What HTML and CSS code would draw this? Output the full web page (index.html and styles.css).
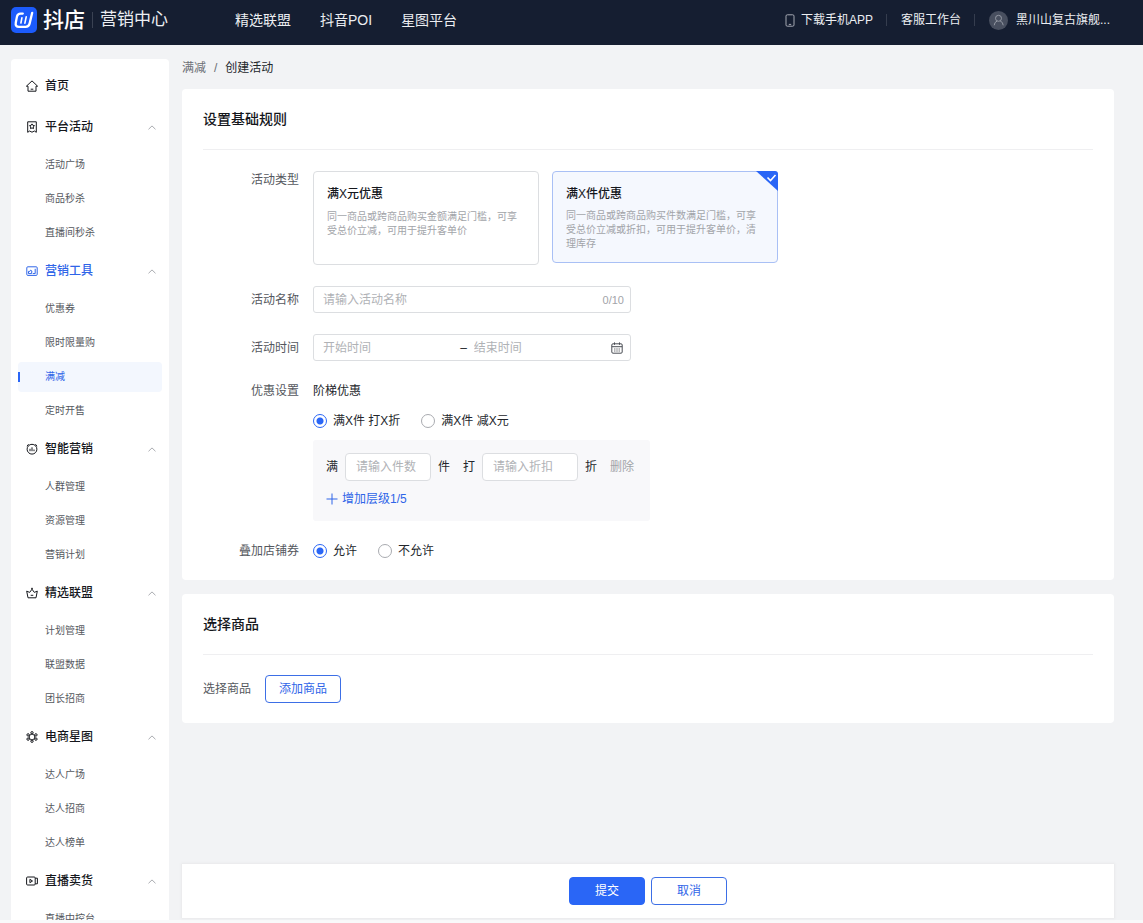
FILE: index.html
```html
<!DOCTYPE html>
<html lang="zh-CN">
<head>
<meta charset="utf-8">
<meta name="viewport" content="width=device-width, initial-scale=1">
<title>创建活动 - 营销中心</title>
<link rel="stylesheet" href="styles.css">
</head>
<body>
<svg class="sprite" aria-hidden="true">
  <symbol id="chevron" viewBox="0 0 8 5"><path d="M.5 4.300 4 .9l3.500 3.400"/></symbol>
</svg>

<header class="topbar">
  <a class="brand" href="#">
    <svg class="brand-mark" viewBox="0 0 26 26" aria-hidden="true">
      <rect width="26" height="26" rx="5" fill="#1c5bfb"/>
      <g fill="none" stroke="#fff" stroke-linecap="round" stroke-linejoin="round">
        <path stroke-width="2.300" d="M11.800 6.600H9.600Q6.700 6.600 6 9.400L4.800 15.500Q4 19.800 8 19.800h6.600q3.200 0 4-3.200L21.200 5.800"/>
        <path stroke-width="1.600" d="m10.900 10.800-1 5.200M15.200 9.800l-1.300 6.400"/>
      </g>
    </svg>
    <span class="brand-name">抖店</span>
    <span class="brand-sub">营销中心</span>
  </a>
  <nav class="topnav">
    <a href="#">精选联盟</a>
    <a href="#">抖音POI</a>
    <a href="#">星图平台</a>
  </nav>
  <div class="account">
    <a class="account-link" href="#">
      <svg class="phone" viewBox="0 0 10 13" aria-hidden="true"><rect x="1" y=".8" width="8" height="11.400" rx="1.300"/><path d="M3.800 10.400h2.400"/></svg>
      下载手机APP
    </a>
    <a class="account-link" href="#">客服工作台</a>
    <a class="account-link" href="#">
      <svg class="avatar" viewBox="0 0 19 19" aria-hidden="true"><circle cx="9.500" cy="9.500" r="9.500" fill="#484f5f"/><g fill="none" stroke="#9499a4"><circle cx="9.500" cy="7.300" r="3"/><path d="M5.200 14.300q.2-3.300 3-4.300m6 4.300q-.2-3.300-3-4.300"/></g></svg>
      黑川山复古旗舰...
    </a>
  </div>
</header>

<div class="layout">
  <nav class="sidebar" aria-label="主菜单">
    <a class="menu-head menu-home" href="#">
      <svg class="icon" viewBox="0 0 12 12" aria-hidden="true"><path d="M.4 6.200 6 .9l5.600 5.300H10v5H2v-5zM4.700 9.200h2.600"/></svg>
      首页
    </a>

    <button class="menu-head" type="button" aria-expanded="true">
      <svg class="icon" viewBox="0 0 12 12" aria-hidden="true"><path d="M1.700.8h8.600v10.500L8.400 10 6 11.200 3.600 10l-1.900 1.300zM6 2.900l.8 1.400 1.700.3-1.200 1.300.2 1.700L6 6.900l-1.500.7.2-1.700-1.200-1.300 1.700-.3z"/></svg>
      平台活动<svg class="chevron" aria-hidden="true"><use href="#chevron"/></svg>
    </button>
    <ul class="menu-list">
      <li><a href="#">活动广场</a></li>
      <li><a href="#">商品秒杀</a></li>
      <li><a href="#">直播间秒杀</a></li>
    </ul>

    <button class="menu-head is-current" type="button" aria-expanded="true">
      <svg class="icon" viewBox="0 0 12 12" aria-hidden="true"><rect x=".8" y="1.800" width="10.400" height="8.600" rx="1"/><path d="M2.500 8.600V6.400h1.300l.8-1.200 1.300.8-.4 2.600zM6.700 8.600h2.500V3.800"/></svg>
      营销工具<svg class="chevron" aria-hidden="true"><use href="#chevron"/></svg>
    </button>
    <ul class="menu-list">
      <li><a href="#">优惠券</a></li>
      <li><a href="#">限时限量购</a></li>
      <li><a class="is-active" href="#" aria-current="page">满减</a></li>
      <li><a href="#">定时开售</a></li>
    </ul>

    <button class="menu-head" type="button" aria-expanded="true">
      <svg class="icon" viewBox="0 0 12 12" aria-hidden="true"><circle cx="6" cy="6.200" r="4.900"/><path d="M1 3.200 2.600 1.200M11 3.200 9.400 1.200M4 5.800v2.400M6 4.300v3.900M8 6.500v1.700"/></svg>
      智能营销<svg class="chevron" aria-hidden="true"><use href="#chevron"/></svg>
    </button>
    <ul class="menu-list">
      <li><a href="#">人群管理</a></li>
      <li><a href="#">资源管理</a></li>
      <li><a href="#">营销计划</a></li>
    </ul>

    <button class="menu-head" type="button" aria-expanded="true">
      <svg class="icon" viewBox="0 0 12 12" aria-hidden="true"><path d="M2 10.800.7 4.100l3 1.300L6 2.200l2.300 3.200 3-1.300L10 10.800zM4.700 8.300h2.600"/><circle cx="6" cy="1.500" r=".5"/></svg>
      精选联盟<svg class="chevron" aria-hidden="true"><use href="#chevron"/></svg>
    </button>
    <ul class="menu-list">
      <li><a href="#">计划管理</a></li>
      <li><a href="#">联盟数据</a></li>
      <li><a href="#">团长招商</a></li>
    </ul>

    <button class="menu-head" type="button" aria-expanded="true">
      <svg class="icon" viewBox="0 0 12 12" aria-hidden="true"><path d="M6 2.900 8.700 4.500v3L6 9.100 3.300 7.500v-3z"/><circle cx="6" cy="1.800" r="1.200"/><circle cx="9.900" cy="3.900" r="1.200"/><circle cx="9.900" cy="8.100" r="1.200"/><circle cx="6" cy="10.200" r="1.200"/><circle cx="2.100" cy="8.100" r="1.200"/><circle cx="2.100" cy="3.900" r="1.200"/></svg>
      电商星图<svg class="chevron" aria-hidden="true"><use href="#chevron"/></svg>
    </button>
    <ul class="menu-list">
      <li><a href="#">达人广场</a></li>
      <li><a href="#">达人招商</a></li>
      <li><a href="#">达人榜单</a></li>
    </ul>

    <button class="menu-head" type="button" aria-expanded="true">
      <svg class="icon" viewBox="0 0 12 12" aria-hidden="true"><rect x=".6" y="2" width="8.600" height="8" rx="1"/><path d="M9.200 3.200h2.200v5.600H9.200M3.900 4.300v3.400L6.500 6z"/></svg>
      直播卖货<svg class="chevron" aria-hidden="true"><use href="#chevron"/></svg>
    </button>
    <ul class="menu-list">
      <li><a href="#">直播中控台</a></li>
    </ul>
  </nav>

  <main class="content">
    <nav class="crumbs" aria-label="面包屑">
      <a href="#">满减</a><span>/</span><b>创建活动</b>
    </nav>

    <form class="form" id="activity">
      <section class="card">
        <h2>设置基础规则</h2>
        <div class="rows">
          <div class="row row-text" role="radiogroup" aria-labelledby="type-label">
            <span class="label" id="type-label">活动类型</span>
            <div class="types">
              <label class="type">
                <input type="radio" name="type">
                <strong>满X元优惠</strong>
                <span>同一商品或跨商品购买金额满足门槛，可享受总价立减，可用于提升客单价</span>
              </label>
              <label class="type type-selected">
                <input type="radio" name="type" checked>
                <strong>满X件优惠</strong>
                <span>同一商品或跨商品购买件数满足门槛，可享受总价立减或折扣，可用于提升客单价，清理库存</span>
                <svg class="tick" viewBox="0 0 22 20" aria-hidden="true"><path fill="#2a66f6" d="M0 0h19q3 0 3 3v17z"/><path fill="none" stroke="#fff" stroke-width="1.600" d="m11.500 6.500 3 3 5-5.500"/></svg>
              </label>
            </div>
          </div>

          <div class="row">
            <label class="label" for="name">活动名称</label>
            <div class="field">
              <input id="name" type="text" maxlength="10" placeholder="请输入活动名称">
              <span class="count">0/10</span>
            </div>
          </div>

          <div class="row">
            <label class="label" for="start">活动时间</label>
            <div class="field">
              <input id="start" type="text" placeholder="开始时间">
              <span class="dash">–</span>
              <input type="text" aria-label="结束时间" placeholder="结束时间">
              <svg class="calendar" viewBox="0 0 12 12" aria-hidden="true"><rect x=".8" y="1.800" width="10.400" height="9.400" rx="1.200"/><path d="M.8 4.700h10.400M3.500.4v2.400M8.500.4v2.400M3.200 7h1.200M5.400 7h1.200M7.600 7h1.200M3.200 9h1.200M5.400 9h1.200M7.600 9h1.200"/></svg>
            </div>
          </div>

          <div class="row row-text">
            <span class="label">优惠设置</span>
            <div class="discount">
              <span>阶梯优惠</span>
              <div class="radios">
                <label><input type="radio" name="mode" checked>满X件 打X折</label>
                <label><input type="radio" name="mode">满X件 减X元</label>
              </div>
              <div class="tiers">
                <div class="tier">
                  <label for="pieces">满</label>
                  <input class="pieces" id="pieces" type="text" placeholder="请输入件数">
                  <span class="unit">件</span>
                  <label for="rate">打</label>
                  <input class="rate" id="rate" type="text" placeholder="请输入折扣">
                  <span>折</span>
                  <button class="remove" type="button" disabled>删除</button>
                </div>
                <button class="add" type="button">
                  <svg viewBox="0 0 12 12" aria-hidden="true"><path d="M6 .5v11M.5 6h11"/></svg>增加层级1/5
                </button>
              </div>
            </div>
          </div>

          <div class="row row-text" role="radiogroup" aria-labelledby="stack-label">
            <span class="label" id="stack-label">叠加店铺券</span>
            <div class="radios">
              <label><input type="radio" name="stack" checked>允许</label>
              <label><input type="radio" name="stack">不允许</label>
            </div>
          </div>
        </div>
      </section>

      <section class="card">
        <h2>选择商品</h2>
        <div class="goods">
          <span>选择商品</span>
          <button class="btn" type="button">添加商品</button>
        </div>
      </section>
    </form>

    <footer class="actions">
      <button class="btn btn-primary" type="submit" form="activity">提交</button>
      <button class="btn" type="button">取消</button>
    </footer>
  </main>
</div>
</body>
</html>
```
FILE: styles.css
```css
* { box-sizing: border-box; }

body {
  margin: 0;
  height: 100vh;
  display: flex;
  flex-direction: column;
  background: #f2f3f5;
  color: #23262b;
  font: 12px/20px "Liberation Sans", "Noto Sans CJK SC", sans-serif;
}

a { color: inherit; text-decoration: none; }
button, input { font: inherit; color: inherit; }
button { padding: 0; border: 0; background: none; cursor: pointer; }
input::placeholder { color: #b0b2b6; opacity: 1; }
.sprite { display: none; }

/* Top bar */
.topbar {
  flex: none;
  display: flex;
  align-items: center;
  height: 45px;
  padding: 0 33px 5px 11px;
  background: #151e31;
  color: #eceef2;
}
.brand { display: flex; align-items: center; white-space: nowrap; }
.brand-mark { width: 26px; height: 26px; }
.brand-name { margin-left: 6px; font-size: 21px; font-weight: 500; color: #fff; }
.brand-sub {
  margin-left: 7px;
  padding-left: 7px;
  border-left: 1px solid #3a4253;
  font-size: 17px;
  line-height: 16px;
}
.topnav { display: flex; gap: 29px; margin-left: 67px; font-size: 14px; white-space: nowrap; }
.account { display: flex; margin-left: auto; white-space: nowrap; }
.account-link { display: flex; align-items: center; }
.account-link + .account-link::before {
  content: "";
  width: 1px;
  height: 12px;
  margin: 0 14px 0 13px;
  background: #353d4e;
}
.phone { width: 10px; height: 13px; margin-right: 6px; fill: none; stroke: #a5a9b3; }
.avatar { width: 19px; height: 19px; margin-right: 8px; }

/* Columns under the top bar */
.layout {
  flex: 1;
  min-height: 0;
  display: flex;
  gap: 13px;
  padding: 0 29px 0 11px;
  border-bottom: 3px solid #f9f9fa;
}

/* Side menu */
.sidebar {
  flex: none;
  width: 158px;
  margin-top: 14px;
  padding: 6px 7px 0;
  overflow: hidden;
  background: #fff;
  border-radius: 4px 4px 0 0;
}
.menu-head {
  display: flex;
  align-items: center;
  width: 100%;
  height: 40px;
  padding: 0 6px 0 8px;
  font-weight: 500;
  color: #15171c;
}
.menu-home { height: 42px; }
.menu-head.is-current { color: #2f65e8; }
.icon {
  width: 12px;
  height: 12px;
  margin-right: 7px;
  fill: none;
  stroke: currentColor;
  stroke-linejoin: round;
}
.chevron { width: 8px; height: 5px; margin-left: auto; fill: none; stroke: #a9abb0; }
.menu-list { margin: 0; padding: 1px 0; list-style: none; font-size: 10px; color: #55585e; }
.menu-list li { padding: 2px 0; }
.menu-list a {
  display: flex;
  align-items: center;
  height: 30px;
  padding-left: 27px;
  border-radius: 4px;
}
.menu-list .is-active {
  background: linear-gradient(#2a66f6, #2a66f6) 0 50% / 2px 10px no-repeat #f3f7fe;
  color: #2f65e8;
}

/* Page content */
.content { flex: 1; min-width: 0; display: flex; flex-direction: column; }
.crumbs { flex: none; display: flex; gap: 8px; padding: 13px 0 11px; color: #6b6e74; }
.crumbs b { font-weight: 400; color: #23262b; }
.form {
  flex: 1;
  min-height: 0;
  overflow: auto;
  display: flex;
  flex-direction: column;
  gap: 14px;
}
.card { flex: none; padding: 0 21px 20px; background: #fff; border-radius: 4px; }
.card h2 {
  margin: 0;
  padding: 20px 0;
  border-bottom: 1px solid #efeff1;
  font-size: 14px;
  font-weight: 500;
  color: #15171c;
}
.rows { display: flex; flex-direction: column; gap: 21px; padding-top: 21px; }
.row { display: flex; gap: 14px; line-height: 18px; }
.label { flex: none; width: 96px; text-align: right; color: #55585e; }
.row > .label { padding-top: 5px; }
.row-text > .label { padding-top: 0; }

.types { display: flex; align-items: flex-start; gap: 13px; height: 94px; }
.type {
  position: relative;
  display: flex;
  flex-direction: column;
  gap: 7px;
  width: 226px;
  min-height: 94px;
  padding: 13px;
  border: 1px solid #dcdee1;
  border-radius: 4px;
  cursor: pointer;
}
.type input { position: absolute; opacity: 0; margin: 0; }
.type strong { font-weight: 500; color: #15171c; }
.type span { font-size: 10px; line-height: 14px; color: #a2a4a9; }
.type-selected { min-height: 92px; padding-bottom: 10px; gap: 6px; border-color: #a9c0f5; background: #f5f8fe; }
.tick { position: absolute; top: -1px; right: -1px; width: 22px; height: 20px; }

.field {
  display: flex;
  align-items: center;
  width: 318px;
  height: 27px;
  padding: 0 6px 0 9px;
  border: 1px solid #dcdee1;
  border-radius: 3px;
}
.field input { flex: 1; min-width: 0; padding: 0; border: 0; outline: 0; background: none; }
.count { font-size: 11px; color: #a2a4a9; }
.dash { margin-right: 7px; }
.calendar { width: 12px; height: 12px; margin-right: 1px; fill: none; stroke: #4b4e54; }

.discount { display: flex; flex-direction: column; }
.radios { display: flex; gap: 21px; }
.discount .radios { padding: 12px 0 10px; }
.radios label { display: flex; align-items: center; gap: 6px; cursor: pointer; }
.radios input {
  appearance: none;
  flex: none;
  width: 14px;
  height: 14px;
  margin: 0;
  border: 1px solid #a9abb0;
  border-radius: 50%;
  background: #fff;
}
.radios input:checked {
  border-color: #2a66f6;
  background: radial-gradient(circle, #2a66f6 3px, #fff 4px);
}

.tiers {
  width: 337px;
  padding: 13px;
  border-radius: 3px;
  background: #f8f8fa;
}
.tier { display: flex; align-items: center; gap: 7px; }
.tier input {
  height: 28px;
  padding: 0 10px;
  border: 1px solid #dcdee1;
  border-radius: 4px;
  background: #fff;
}
.tier .pieces { width: 86px; }
.tier .rate { width: 96px; }
.unit { margin-right: 6px; }
.remove { margin-left: 6px; color: #a2a4a9; }
.add { display: flex; align-items: center; gap: 4px; margin-top: 9px; color: #2f65e8; }
.add svg { width: 12px; height: 12px; fill: none; stroke: currentColor; }

.goods { display: flex; align-items: center; gap: 14px; padding-top: 20px; color: #55585e; }
.btn {
  width: 76px;
  height: 28px;
  border: 1px solid #3d6fe6;
  border-radius: 4px;
  background: #fff;
  color: #2f65e8;
}
.btn-primary { border-color: #2a66f6; background: #2a66f6; color: #fff; }

.actions {
  flex: none;
  display: flex;
  justify-content: center;
  gap: 6px;
  margin-bottom: 2px;
  padding: 13px 0;
  background: #fff;
  box-shadow: 0 0 2px 1px #e9eaeb;
}
```
